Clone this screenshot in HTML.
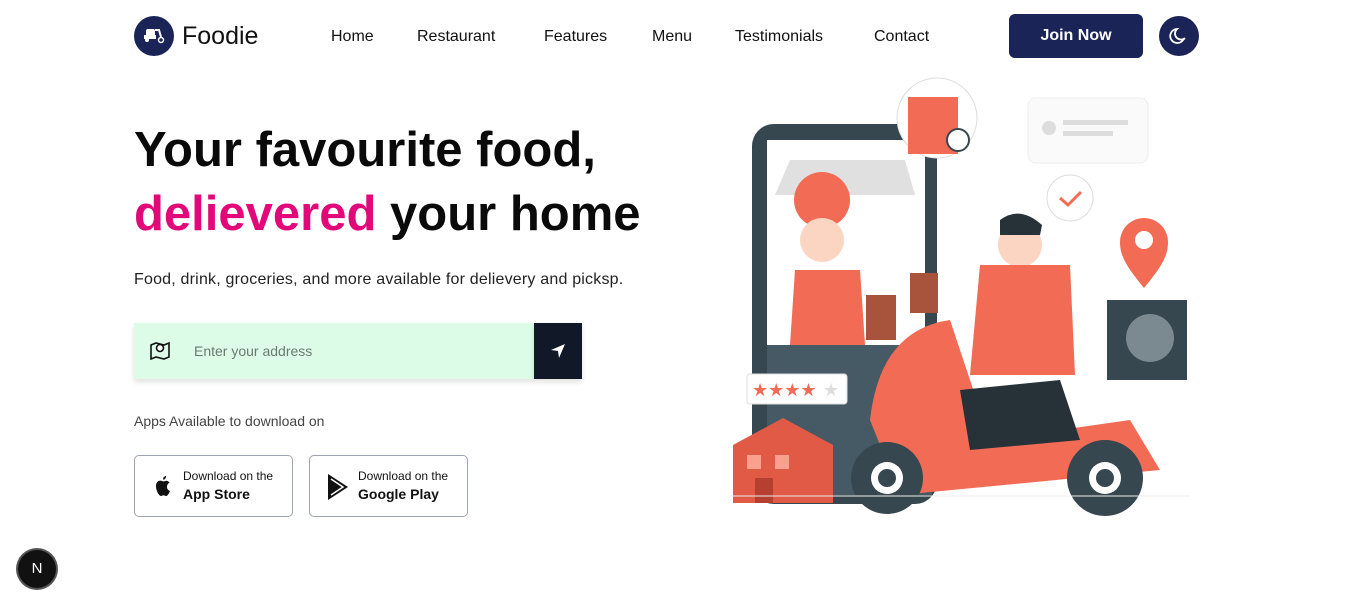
<!DOCTYPE html>
<html><head><meta charset="utf-8"><style>
*{margin:0;padding:0;box-sizing:border-box}
body{width:1352px;height:607px;background:#fff;font-family:"Liberation Sans",sans-serif;position:relative;overflow:hidden;color:#111}
.a{position:absolute}
.nav a{position:absolute;top:28px;font-size:16px;color:#111;text-decoration:none;font-weight:500}
h1{position:absolute;left:134px;top:118px;font-size:49px;font-weight:700;line-height:64px;letter-spacing:0;color:#0a0a0a}
.pink{color:#e2087a}
.btn{position:absolute;top:455px;width:159px;height:62px;border:1px solid #9ca3af;border-radius:5px}
.btn .s{position:absolute;left:48px;top:13px;font-size:12px;color:#111}
.btn .b{position:absolute;left:48px;top:30px;font-size:14px;font-weight:700;color:#111}
</style></head><body>
<div class="a" style="left:134px;top:16px;width:40px;height:40px;border-radius:50%;background:#1a2456"></div>
<svg class="a" style="left:143px;top:26px" width="22" height="20" viewBox="0 0 22 20"><rect x="3" y="3" width="9" height="7" rx="2" fill="#fff"/><rect x="1" y="9" width="12" height="4" fill="#fff"/><path d="M12 4 L16 4 L18 11" stroke="#fff" stroke-width="2" fill="none"/><circle cx="4" cy="14" r="2" fill="#fff"/><circle cx="18" cy="14" r="2.5" stroke="#fff" stroke-width="1.5" fill="none"/></svg>
<div class="a" style="left:182px;top:22px;font-size:25px;font-weight:500">Foodie</div>
<div class="nav"><a style="left:331px">Home</a><a style="left:417px">Restaurant</a><a style="left:544px">Features</a><a style="left:652px">Menu</a><a style="left:735px">Testimonials</a><a style="left:874px">Contact</a></div>
<div class="a" style="left:1009px;top:14px;width:134px;height:44px;background:#1a2456;border-radius:6px;color:#fff;font-size:16px;font-weight:700;text-align:center;line-height:44px">Join Now</div>
<div class="a" style="left:1159px;top:16px;width:40px;height:40px;border-radius:50%;background:#1a2456"></div>
<svg class="a" style="left:1169px;top:26px" width="20" height="20" viewBox="0 0 20 20"><path d="M14 14 A7 7 0 1 1 8 3 A5.5 5.5 0 0 0 16 12 Z" stroke="#fff" stroke-width="1.8" fill="none"/></svg>
<h1>Your favourite food,<br><span class="pink">delievered</span> your home</h1>
<div class="a" style="left:134px;top:271px;font-size:16px;color:#222;letter-spacing:0.2px">Food, drink, groceries, and more available for delievery and picksp.</div>
<div class="a" style="left:134px;top:323px;width:400px;height:56px;background:#dcfce7;box-shadow:0 3px 5px rgba(0,0,0,.12)"></div>
<svg class="a" style="left:149px;top:340px" width="22" height="20" viewBox="0 0 22 20"><path d="M2 5 L7 3 L15 5 L20 3 V17 L15 19 L7 17 L2 19Z" stroke="#111" stroke-width="1.6" fill="none"/><circle cx="11" cy="8" r="3.5" stroke="#111" stroke-width="1.6" fill="#fff"/></svg>
<div class="a" style="left:194px;top:343px;font-size:14px;color:#6b7a6f">Enter your address</div>
<div class="a" style="left:534px;top:323px;width:48px;height:56px;background:#111827;box-shadow:0 3px 5px rgba(0,0,0,.12)"></div>
<svg class="a" style="left:549px;top:342px" width="18" height="18" viewBox="0 0 18 18"><path d="M16 2 L2 8 L9 9 L10 16Z" fill="#fff"/></svg>
<div class="a" style="left:134px;top:413px;font-size:14px;color:#444">Apps Available to download on</div>
<div class="btn" style="left:134px"><svg class="a" style="left:18px;top:19px" width="20" height="23" viewBox="0 0 20 23"><path d="M14 12 C14 9 16 8 16.5 7.5 C15 5.5 13 5.5 12 6 C11 6.5 10 6.5 9 6 C7 5 3 6 3 11 C3 16 6 21 8 21 C9 21 9.5 20.3 10.5 20.3 C11.5 20.3 12 21 13 21 C15 21 16.5 17 17 16 C15 15 14 14 14 12Z M12 4 C13 3 13 1.5 13 1 C12 1 10 2 10 4.5 C11 4.5 11.5 4.5 12 4Z" fill="#111"/></svg><div class="s">Download on the</div><div class="b">App Store</div></div>
<div class="btn" style="left:309px"><svg class="a" style="left:16px;top:17px" width="24" height="28" viewBox="0 0 24 28"><path d="M2 1 L22 14 L2 27Z" fill="#111"/><path d="M5 6 L17 14 L5 22" stroke="#fff" stroke-width="1.5" fill="none"/></svg><div class="s">Download on the</div><div class="b">Google Play</div></div>
<div class="a" style="left:18px;top:550px;width:38px;height:38px;border-radius:50%;background:#111;box-shadow:0 0 0 2px #555;color:#fff;font-size:15px;text-align:center;line-height:38px">N</div>
<svg class="a" style="left:730px;top:75px" width="470" height="450" viewBox="730 75 470 450">
<rect x="752" y="124" width="185" height="380" rx="22" fill="#37474f"/>
<rect x="767" y="140" width="158" height="205" fill="#fff"/>
<path d="M790 160 H905 L915 195 H775Z" fill="#e0e0e0"/>
<rect x="1028" y="98" width="120" height="65" rx="8" fill="#fafafa" stroke="#eee"/>
<circle cx="1049" cy="128" r="7" fill="#ddd"/><rect x="1063" y="120" width="65" height="5" fill="#ddd"/><rect x="1063" y="131" width="50" height="5" fill="#ddd"/>
<circle cx="937" cy="118" r="40" fill="#fff" stroke="#ddd"/><rect x="908" y="97" width="50" height="57" fill="#f26b55"/><circle cx="958" cy="140" r="11" fill="#fff" stroke="#37474f" stroke-width="2"/>
<circle cx="1070" cy="198" r="23" fill="#fff" stroke="#ddd"/><path d="M1060 198 L1068 205 L1081 192" stroke="#f26b55" stroke-width="3" fill="none"/>
<path d="M1144 288 C1125 265 1120 255 1120 242 A24 24 0 0 1 1168 242 C1168 255 1163 265 1144 288Z" fill="#f26b55"/><circle cx="1144" cy="240" r="9" fill="#fff"/>
<rect x="1107" y="300" width="80" height="80" fill="#37474f"/><circle cx="1150" cy="338" r="24" fill="#7a8a90"/>
<circle cx="822" cy="200" r="28" fill="#f26b55"/><circle cx="822" cy="240" r="22" fill="#fcd5c2"/><path d="M795 270 H860 L865 345 H790Z" fill="#f26b55"/>
<circle cx="1020" cy="245" r="22" fill="#fcd5c2"/><path d="M1000 220 Q1020 205 1042 225 L1040 235 L1000 235Z" fill="#263238"/>
<path d="M980 265 H1070 L1075 375 H970Z" fill="#f26b55"/>
<rect x="866" y="295" width="30" height="45" fill="#a8543c"/><rect x="910" y="273" width="28" height="40" fill="#a8543c"/>
<rect x="767" y="345" width="165" height="150" fill="#455a64"/>
<path d="M870 420 Q880 330 950 320 L990 440 L1130 420 L1160 470 L900 495Z" fill="#f26b55"/>
<path d="M960 390 L1060 380 L1080 440 L970 450Z" fill="#263238"/>
<circle cx="887" cy="478" r="36" fill="#37474f"/><circle cx="887" cy="478" r="16" fill="#fff"/><circle cx="887" cy="478" r="9" fill="#37474f"/>
<circle cx="1105" cy="478" r="38" fill="#37474f"/><circle cx="1105" cy="478" r="16" fill="#fff"/><circle cx="1105" cy="478" r="9" fill="#37474f"/>
<rect x="747" y="374" width="100" height="30" rx="3" fill="#fff" stroke="#ddd"/>
<text x="752" y="396" font-size="18" fill="#f26b55">★★★★</text><text x="823" y="396" font-size="18" fill="#ddd">★</text>
<path d="M733 445 L783 418 L833 445 V503 H733Z" fill="#e05a45"/><rect x="755" y="478" width="18" height="25" fill="#b5402f"/><rect x="747" y="455" width="14" height="14" fill="#f9a08f"/><rect x="775" y="455" width="14" height="14" fill="#f9a08f"/>
<line x1="730" y1="496" x2="1190" y2="496" stroke="#eee"/>
</svg>
</body></html>
